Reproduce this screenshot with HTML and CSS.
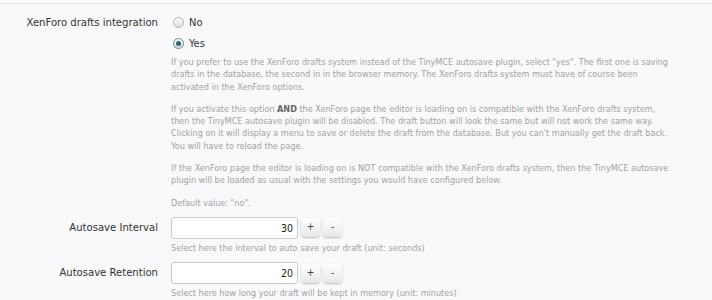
FILE: index.html
```html
<!DOCTYPE html>
<html>
<head>
<title>TinyMCE options</title>
<link rel="stylesheet" href="styles.css">
</head>
<body>
<!-- Options form -->
<div class="options">
    <dl class="ctrl-unit">
        <dt>XenForo drafts integration</dt>
        <dd>
            <ul class="radios">
                <li><span class="radio"></span>No</li>
                <li><span class="radio checked"></span>Yes</li>
            </ul>
            <div class="explain">
                <p>If you prefer to use the XenForo drafts system instead of the TinyMCE autosave plugin, select "yes". The first one is saving<br>drafts in the database, the second in in the browser memory. The XenForo drafts system must have of course been<br>activated in the XenForo options.</p>
                <p>If you activate this option <b>AND</b> the XenForo page the editor is loading on is compatible with the XenForo drafts system,<br>then the TinyMCE autosave plugin will be disabled. The draft button will look the same but will not work the same way.<br>Clicking on it will display a menu to save or delete the draft from the database. But you can't manually get the draft back.<br>You will have to reload the page.</p>
                <p>If the XenForo page the editor is loading on is NOT compatible with the XenForo drafts system, then the TinyMCE autosave<br>plugin will be loaded as usual with the settings you would have configured below.</p>
                <p>Default value: "no".</p>
            </div>
        </dd>
    </dl>
    <dl class="ctrl-unit spin">
        <dt>Autosave Interval</dt>
        <dd>
            <div class="spinbox">
                <span class="field">30</span>
                <span class="btn">+</span>
                <span class="btn">-</span>
            </div>
            <div class="explain hint">Select here the interval to auto save your draft (unit: seconds)</div>
        </dd>
    </dl>
    <dl class="ctrl-unit spin">
        <dt>Autosave Retention</dt>
        <dd>
            <div class="spinbox">
                <span class="field">20</span>
                <span class="btn">+</span>
                <span class="btn">-</span>
            </div>
            <div class="explain hint">Select here how long your draft will be kept in memory (unit: minutes)</div>
        </dd>
    </dl>
</div>
</body>
</html>
```

FILE: styles.css
```css
body {
    font-family: "DejaVu Sans Condensed", "DejaVu Sans", sans-serif;
    background: #f9f9fb;
    color: #333;
    margin: 0px;
    padding: 0px;
    overflow: hidden;
}
.options {
    margin-top: 3px;
    border-top: 1px solid #e2e5e9;
    padding-top: 8px;
}
.ctrl-unit {
    display: grid;
    grid-template-columns: 158px 1fr;
    column-gap: 13px;
    margin: 0px;
}
.ctrl-unit dt {
    text-align: right;
    font-size: 11.2px;
    line-height: 21px;
    color: #333;
}
.ctrl-unit dd {
    margin: 0px;
}
.radios {
    list-style: none;
    margin: 0px;
    padding: 0px;
}
.radios li {
    display: flex;
    align-items: center;
    height: 21px;
    font-size: 11px;
    color: #333;
}
.radio {
    display: inline-block;
    width: 9px;
    height: 9px;
    margin: 0px 5px 0px 2px;
    border-radius: 50%;
    border: 1px solid #b4b4b4;
    background: linear-gradient(#fdfdfd, #dcdcdc);
    box-sizing: content-box;
    position: relative;
}
.radio.checked {
    border-color: #6a8a98;
}
.radio.checked:after {
    content: "";
    position: absolute;
    left: 2px;
    top: 2px;
    width: 5px;
    height: 5px;
    border-radius: 50%;
    background: #2c6478;
}
.explain {
    font-size: 9px;
    line-height: 12.3px;
    color: #a2a2a2;
    margin-top: 2px;
}
.explain p {
    margin: 0px 0px 10px;
}
.explain p:last-child {
    margin-bottom: 0px;
}
.explain b {
    color: #666;
}
.spin {
    margin-top: 8px;
}
.spin dt {
    line-height: 22px;
}
.spinbox {
    display: flex;
    align-items: center;
    gap: 2px;
}
.field {
    width: 127px;
    height: 22px;
    box-sizing: border-box;
    border: 1px solid #c8c8c8;
    border-radius: 3px;
    background: #fff;
    text-align: right;
    font-size: 10.5px;
    line-height: 20px;
    padding-right: 4px;
    color: #222;
}
.btn {
    width: 19px;
    height: 19px;
    margin-left: 1px;
    box-sizing: border-box;
    border-radius: 4px;
    background: linear-gradient(#ffffff, #e6e7ea);
    box-shadow: 0px 1px 2px rgba(0, 0, 0, 0.25);
    text-align: center;
    font-size: 10px;
    line-height: 18px;
    color: #444;
}
.hint {
    margin-top: 3px;
}
```
